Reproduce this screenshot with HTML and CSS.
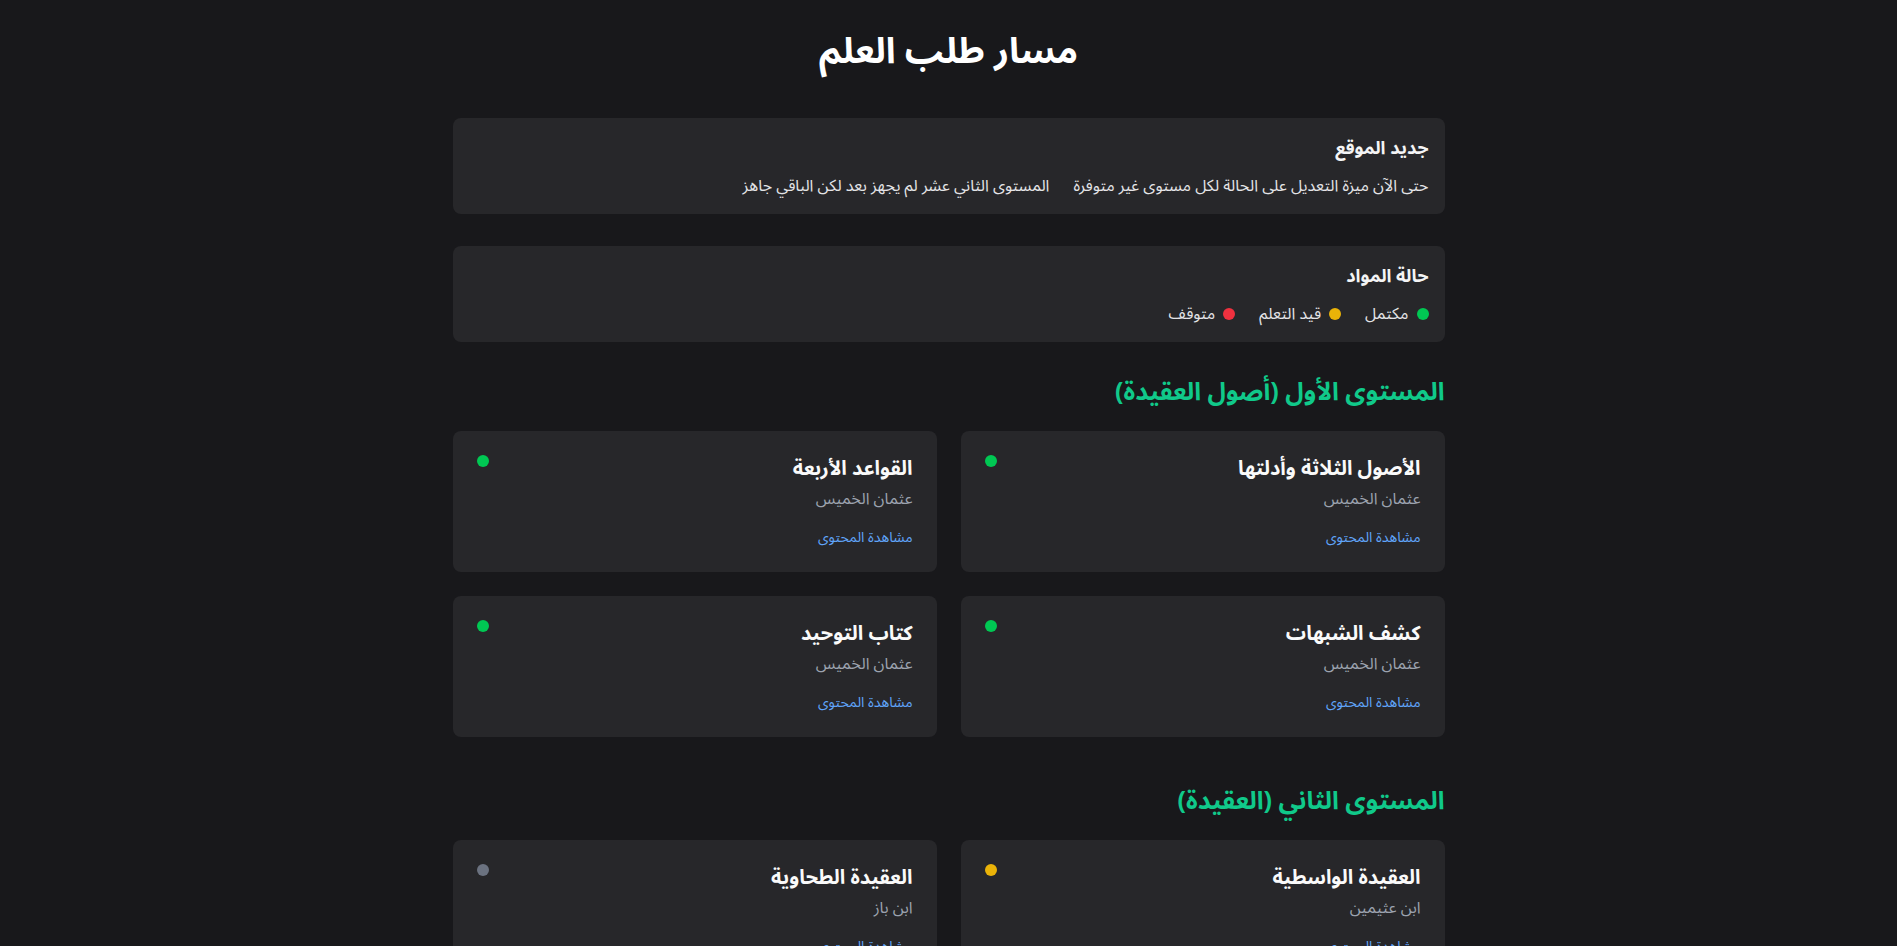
FILE: index.html
```html
<!DOCTYPE html>
<html lang="ar" dir="rtl">
<head>
<meta charset="utf-8">
<title>مسار طلب العلم</title>
<link rel="stylesheet" href="styles.css">
</head>
<body>
<main class="page">
  <h1 class="page-title">مسار طلب العلم</h1>

  <section class="info-card">
    <h2 class="info-title">جديد الموقع</h2>
    <div class="info-row">
      <span>حتى الآن ميزة التعديل على الحالة لكل مستوى غير متوفرة</span>
      <span>المستوى الثاني عشر لم يجهز بعد لكن الباقي جاهز</span>
    </div>
  </section>

  <section class="info-card">
    <h2 class="info-title">حالة المواد</h2>
    <div class="legend">
      <span class="legend-item"><i class="dot dot-done"></i>مكتمل</span>
      <span class="legend-item"><i class="dot dot-progress"></i>قيد التعلم</span>
      <span class="legend-item"><i class="dot dot-stopped"></i>متوقف</span>
    </div>
  </section>

  <section class="level">
    <h2 class="level-title">المستوى الأول (أصول العقيدة)</h2>
    <div class="grid">
      <article class="course">
        <i class="dot dot-done course-dot"></i>
        <h3 class="course-title">الأصول الثلاثة وأدلتها</h3>
        <p class="course-author">عثمان الخميس</p>
        <a class="course-link" href="#">مشاهدة المحتوى</a>
      </article>
      <article class="course">
        <i class="dot dot-done course-dot"></i>
        <h3 class="course-title">القواعد الأربعة</h3>
        <p class="course-author">عثمان الخميس</p>
        <a class="course-link" href="#">مشاهدة المحتوى</a>
      </article>
      <article class="course">
        <i class="dot dot-done course-dot"></i>
        <h3 class="course-title">كشف الشبهات</h3>
        <p class="course-author">عثمان الخميس</p>
        <a class="course-link" href="#">مشاهدة المحتوى</a>
      </article>
      <article class="course">
        <i class="dot dot-done course-dot"></i>
        <h3 class="course-title">كتاب التوحيد</h3>
        <p class="course-author">عثمان الخميس</p>
        <a class="course-link" href="#">مشاهدة المحتوى</a>
      </article>
    </div>
  </section>

  <section class="level">
    <h2 class="level-title">المستوى الثاني (العقيدة)</h2>
    <div class="grid">
      <article class="course">
        <i class="dot dot-progress course-dot"></i>
        <h3 class="course-title">العقيدة الواسطية</h3>
        <p class="course-author">ابن عثيمين</p>
        <a class="course-link" href="#">مشاهدة المحتوى</a>
      </article>
      <article class="course">
        <i class="dot dot-idle course-dot"></i>
        <h3 class="course-title">العقيدة الطحاوية</h3>
        <p class="course-author">ابن باز</p>
        <a class="course-link" href="#">مشاهدة المحتوى</a>
      </article>
    </div>
  </section>
</main>
</body>
</html>
```

FILE: styles.css
```css
* { box-sizing: border-box; }

html, body {
  margin: 0;
  padding: 0;
  background: #18181b;
  color: #f4f4f5;
  font-family: "Noto Sans Arabic", "DejaVu Sans", sans-serif;
}

.page {
  max-width: 1024px;
  margin: 0 auto;
  padding: 32px 16px 48px;
  text-align: right;
}

.page-title {
  margin: 0 0 46px;
  text-align: center;
  font-size: 36px;
  line-height: 40px;
  font-weight: 700;
  color: #ffffff;
}

.info-card {
  background: #27272a;
  border-radius: 8px;
  padding: 16px 16px 17px;
  margin-bottom: 32px;
}

.info-title {
  margin: 0 0 13px;
  font-size: 18px;
  line-height: 28px;
  font-weight: 700;
  color: #f4f4f5;
}

.info-row {
  display: flex;
  flex-wrap: wrap;
  gap: 24px;
  font-size: 16px;
  line-height: 22px;
  color: #e4e4e7;
}

.legend {
  display: flex;
  gap: 24px;
  font-size: 16px;
  line-height: 22px;
  color: #e4e4e7;
}

.legend-item {
  display: flex;
  align-items: center;
  gap: 8px;
}

.dot {
  display: inline-block;
  width: 12px;
  height: 12px;
  border-radius: 50%;
  flex: none;
}

.dot-done { background: #00c853; }
.dot-progress { background: #eab308; }
.dot-stopped { background: #f0313f; }
.dot-idle { background: #6b7280; }

.level {
  margin-bottom: 46px;
}

.level-title {
  margin: 0 0 21px;
  font-size: 25px;
  line-height: 36px;
  font-weight: 700;
  color: #10c98a;
}

.grid {
  display: grid;
  grid-template-columns: 1fr 1fr;
  gap: 24px;
}

.course {
  position: relative;
  background: #27272a;
  border-radius: 8px;
  padding: 24px;
  text-align: right;
}

.course-dot {
  position: absolute;
  top: 24px;
  left: 24px;
}

.course-title {
  margin: 0 0 4px;
  font-size: 20px;
  line-height: 28px;
  font-weight: 700;
  color: #fafafa;
}

.course-author {
  margin: 0 0 16px;
  font-size: 16px;
  line-height: 24px;
  color: #9ca3af;
}

.course-link {
  display: block;
  font-size: 14px;
  line-height: 21px;
  color: #60a5fa;
  text-decoration: none;
}
```
